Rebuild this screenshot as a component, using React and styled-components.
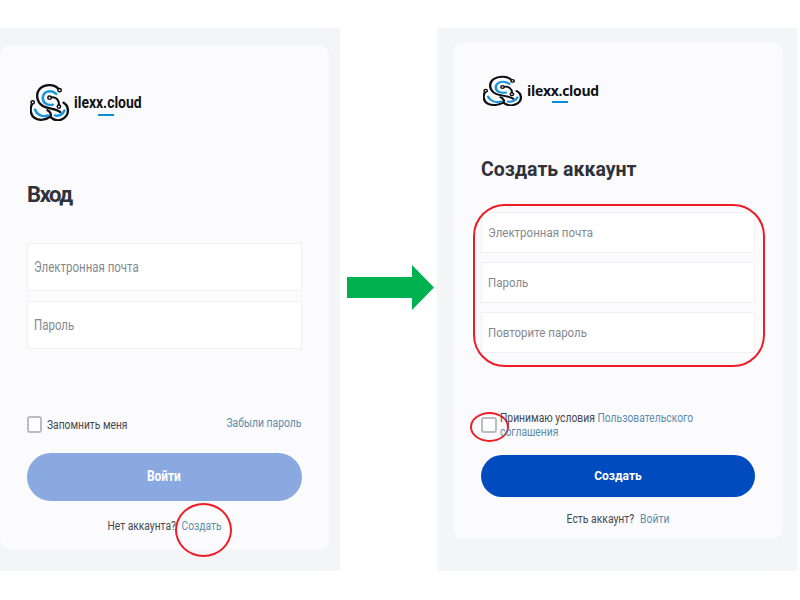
import React from "react";
import styled, { createGlobalStyle } from "styled-components";

const Global = createGlobalStyle`
  html, body { margin: 0; padding: 0; background: #fff; }
  body { font-family: Roboto, "Liberation Sans", sans-serif; }
`;

const Page = styled.div`
  width: 800px;
  height: 600px;
  padding-top: 28px;
  box-sizing: border-box;
  display: flex;
  align-items: flex-start;
  overflow: hidden;
`;

const Panel = styled.section`
  height: 543px;
  width: ${(p) => p.$width}px;
  background: #f4f5f7;
  box-sizing: border-box;
  padding: ${(p) => p.$pad};
  flex: none;
`;

const Card = styled.div`
  background: #fbfbfd;
  border-radius: 11px;
  box-sizing: border-box;
  height: ${(p) => p.$height}px;
  width: ${(p) => p.$width}px;
  padding: ${(p) => p.$pad};
  display: flex;
  flex-direction: column;
`;

const Arrow = styled.svg`
  flex: none;
  margin: 237px 3px 0 7px;
  display: block;
`;

const Brand = styled.div`
  display: flex;
  align-items: flex-start;
  height: ${(p) => p.$height}px;
  margin-left: ${(p) => p.$indent}px;
`;

const BrandName = styled.div`
  position: relative;
  margin: ${(p) => p.$top}px 0 0 ${(p) => p.$gap}px;
  font-family: ${(p) => (p.$squeezed ? "Roboto" : '"Open Sans"')}, sans-serif;
  font-weight: 700;
  font-size: ${(p) => p.$size}px;
  letter-spacing: ${(p) => p.$track}px;
  line-height: 20px;
  color: #101114;
  &::after {
    content: "";
    position: absolute;
    left: ${(p) => p.$bar}px;
    top: ${(p) => p.$barTop}px;
    width: 16px;
    height: 2px;
    background: #0a8fd6;
  }
`;

const Heading = styled.h1`
  margin: ${(p) => p.$top}px 0 ${(p) => p.$bottom}px;
  font-weight: 700;
  font-size: ${(p) => p.$size}px;
  line-height: 28px;
  letter-spacing: ${(p) => p.$track}px;
  color: #30323b;
`;

const Fields = styled.div`
  position: relative;
  display: flex;
  flex-direction: column;
  gap: ${(p) => p.$gap}px;
`;

const Field = styled.div`
  height: ${(p) => p.$height}px;
  box-sizing: border-box;
  background: #fff;
  border: 1px solid #eef0f3;
  display: flex;
  align-items: center;
  padding-left: 6px;
  font-size: ${(p) => p.$size}px;
  color: #85898f;
`;

const Narrow = styled.span`
  display: inline-block;
  white-space: nowrap;
  transform: scaleX(${(p) => p.$sx});
  transform-origin: ${(p) => p.$origin || "left"} center;
`;

const FieldRing = styled.div`
  position: absolute;
  inset: -8px -10px -14px -8px;
  border: 2px solid #ee1c25;
  border-radius: 32px;
  box-sizing: border-box;
`;

const OptionsRow = styled.div`
  display: flex;
  align-items: flex-start;
  justify-content: space-between;
  margin-top: ${(p) => p.$top}px;
  min-height: ${(p) => p.$height}px;
`;

const CheckGroup = styled.div`
  display: flex;
  align-items: ${(p) => (p.$wrap ? "flex-start" : "center")};
  position: relative;
`;

const Box = styled.span`
  flex: none;
  width: ${(p) => p.$w}px;
  height: ${(p) => p.$h}px;
  box-sizing: border-box;
  border: 2px solid #b9bcc2;
  border-radius: 3px;
  background: #fff;
  margin: ${(p) => p.$margin};
`;

const Label = styled.span`
  font-size: 12.5px;
  line-height: 16px;
  color: #45484e;
`;

const Terms = styled.p`
  margin: 0;
  width: 232px;
  font-size: 12px;
  line-height: 13.5px;
  color: #45484e;
  transform: scaleX(0.86);
  transform-origin: left top;
`;

const TextLink = styled.a`
  color: #5f8cab;
  font-size: ${(p) => p.$size || 12.5}px;
  margin-top: ${(p) => p.$top || 0}px;
  margin-right: ${(p) => p.$end || 0}px;
`;

const BigButton = styled.button`
  display: block;
  width: 100%;
  height: ${(p) => p.$height}px;
  margin-top: ${(p) => p.$top}px;
  border: 0;
  padding: 0 ${(p) => p.$lift || 0}px ${(p) => p.$lift || 0}px 0;
  border-radius: 26px;
  background: ${(p) => p.$bg};
  color: #fff;
  font-family: inherit;
  font-weight: 700;
  font-size: ${(p) => p.$size}px;
`;

const Footer = styled.div`
  position: relative;
  margin-top: ${(p) => p.$top}px;
  height: 16px;
`;

const FooterLine = styled.div`
  display: flex;
  justify-content: center;
  gap: ${(p) => p.$gap}px;
  font-size: 12.5px;
  line-height: 16px;
  color: #45484e;
  transform: scaleX(${(p) => p.$sx});
`;

const LinkRing = styled.span`
  position: absolute;
  left: 148px;
  top: -15px;
  width: 57px;
  height: 54px;
  border: 2px solid #ee1c25;
  border-radius: 50%;
  box-sizing: border-box;
`;

const BoxRing = styled.span`
  position: absolute;
  left: -11px;
  top: 0;
  width: 39px;
  height: 30px;
  border: 2px solid #ee1c25;
  border-radius: 50%;
  box-sizing: border-box;
`;

function LogoMark({ height }) {
  const ink = "#0d0f12";
  const blue = "#1596dc";
  return (
    <svg width="39" height={height} viewBox="90 185 116 116" preserveAspectRatio="none" fill="none" strokeLinecap="round">
      <path d="M176 205C166 190 138 186 122 200C106 215 108 242 128 255C144 265 168 262 180 274" stroke={ink} strokeWidth="7" />
      <path d="M190 245C206 255 208 281 190 293C175 303 160 298 150 288" stroke={ink} strokeWidth="7" />
      <path d="M97 247C89 262 90 283 104 292C118 301 138 298 150 288C155 282 150 272 142 268" stroke={ink} strokeWidth="7" />
      <path d="M148 230C165 224 178 236 176 256" stroke={ink} strokeWidth="6" />
      <path d="M168 218C150 202 128 212 128 232C129 247 142 254 158 251" stroke={blue} strokeWidth="7.5" />
      <path d="M105 266C112 284 128 289 144 284" stroke={blue} strokeWidth="7.5" />
      <path d="M164 284C176 287 188 281 192 269" stroke={blue} strokeWidth="7.5" />
      <circle cx="178" cy="207" r="5" fill="#fff" stroke={ink} strokeWidth="4.5" />
      <circle cx="148" cy="230" r="5" fill="#fff" stroke={ink} strokeWidth="4.5" />
      <circle cx="176" cy="257" r="5" fill="#fff" stroke={ink} strokeWidth="4.5" />
      <circle cx="98" cy="244" r="5" fill="#fff" stroke={ink} strokeWidth="4.5" />
    </svg>
  );
}

export default function App() {
  return (
    <Page>
      <Global />
      <Panel $width={340} $pad="17px 0 0 0">
        <Card $width={329} $height={505} $pad="38px 27px 0">
          <Brand $indent={3} $height={39}>
            <LogoMark height={38} />
            <BrandName $squeezed $top={9} $gap={5} $size={17} $track={0} $bar={24} $barTop={22}>
              <Narrow $sx={0.82}>ilexx.cloud</Narrow>
            </BrandName>
          </Brand>
          <Heading $top={59} $bottom={34} $size={22} $track={-1.4}>
            Вход
          </Heading>
          <Fields $gap={10}>
            <Field $height={48} $size={14}><Narrow $sx={0.82}>Электронная почта</Narrow></Field>
            <Field $height={48} $size={14}><Narrow $sx={0.82}>Пароль</Narrow></Field>
          </Fields>
          <OptionsRow $top={67} $height={17}>
            <CheckGroup>
              <Box $w={15} $h={17} $margin="0 5px 0 0" />
              <Label><Narrow $sx={0.82}>Запомнить меня</Narrow></Label>
            </CheckGroup>
            <TextLink $top={-1} $end={1}><Narrow $sx={0.83} $origin="right">Забыли пароль</Narrow></TextLink>
          </OptionsRow>
          <BigButton $height={48} $top={20} $bg="#8aa9e0" $size={14} $lift={2}>
            <Narrow $sx={0.85} $origin="center">Войти</Narrow>
          </BigButton>
          <Footer $top={17}>
            <FooterLine $sx={0.82} $gap={7}>
              Нет аккаунта?
              <TextLink>Создать</TextLink>
            </FooterLine>
            <LinkRing />
          </Footer>
        </Card>
      </Panel>
      <Arrow width="87" height="46" viewBox="0 0 87 46">
        <path d="M0 12H65V0L87 22.5L65 45V33H0Z" fill="#00b14f" />
      </Arrow>
      <Panel $width={360} $pad="14px 0 0 16px">
        <Card $width={330} $height={497} $pad="33px 28px 0">
          <Brand $indent={2} $height={31}>
            <LogoMark height={31} />
            <BrandName $top={6} $gap={5} $size={14} $track={-0.3} $bar={25} $barTop={20}>
              ilexx.cloud
            </BrandName>
          </Brand>
          <Heading $top={50} $bottom={28} $size={19.5} $track={0}>
            Создать аккаунт
          </Heading>
          <Fields $gap={9}>
            <Field $height={41} $size={12.5}><Narrow $sx={0.92}>Электронная почта</Narrow></Field>
            <Field $height={41} $size={12.5}><Narrow $sx={0.92}>Пароль</Narrow></Field>
            <Field $height={41} $size={12.5}><Narrow $sx={0.92}>Повторите пароль</Narrow></Field>
            <FieldRing />
          </Fields>
          <OptionsRow $top={59} $height={27}>
            <CheckGroup $wrap>
              <Box $w={16} $h={16} $margin="5px 3px 0 0" />
              <BoxRing />
              <Terms>
                Принимаю условия <TextLink $size={12}>Пользовательского соглашения</TextLink>
              </Terms>
            </CheckGroup>
          </OptionsRow>
          <BigButton $height={42} $top={16} $bg="#004bbd" $size={12}>
            Создать
          </BigButton>
          <Footer $top={14}>
            <FooterLine $sx={0.83} $gap={7}>
              Есть аккаунт?
              <TextLink>Войти</TextLink>
            </FooterLine>
          </Footer>
        </Card>
      </Panel>
    </Page>
  );
}
